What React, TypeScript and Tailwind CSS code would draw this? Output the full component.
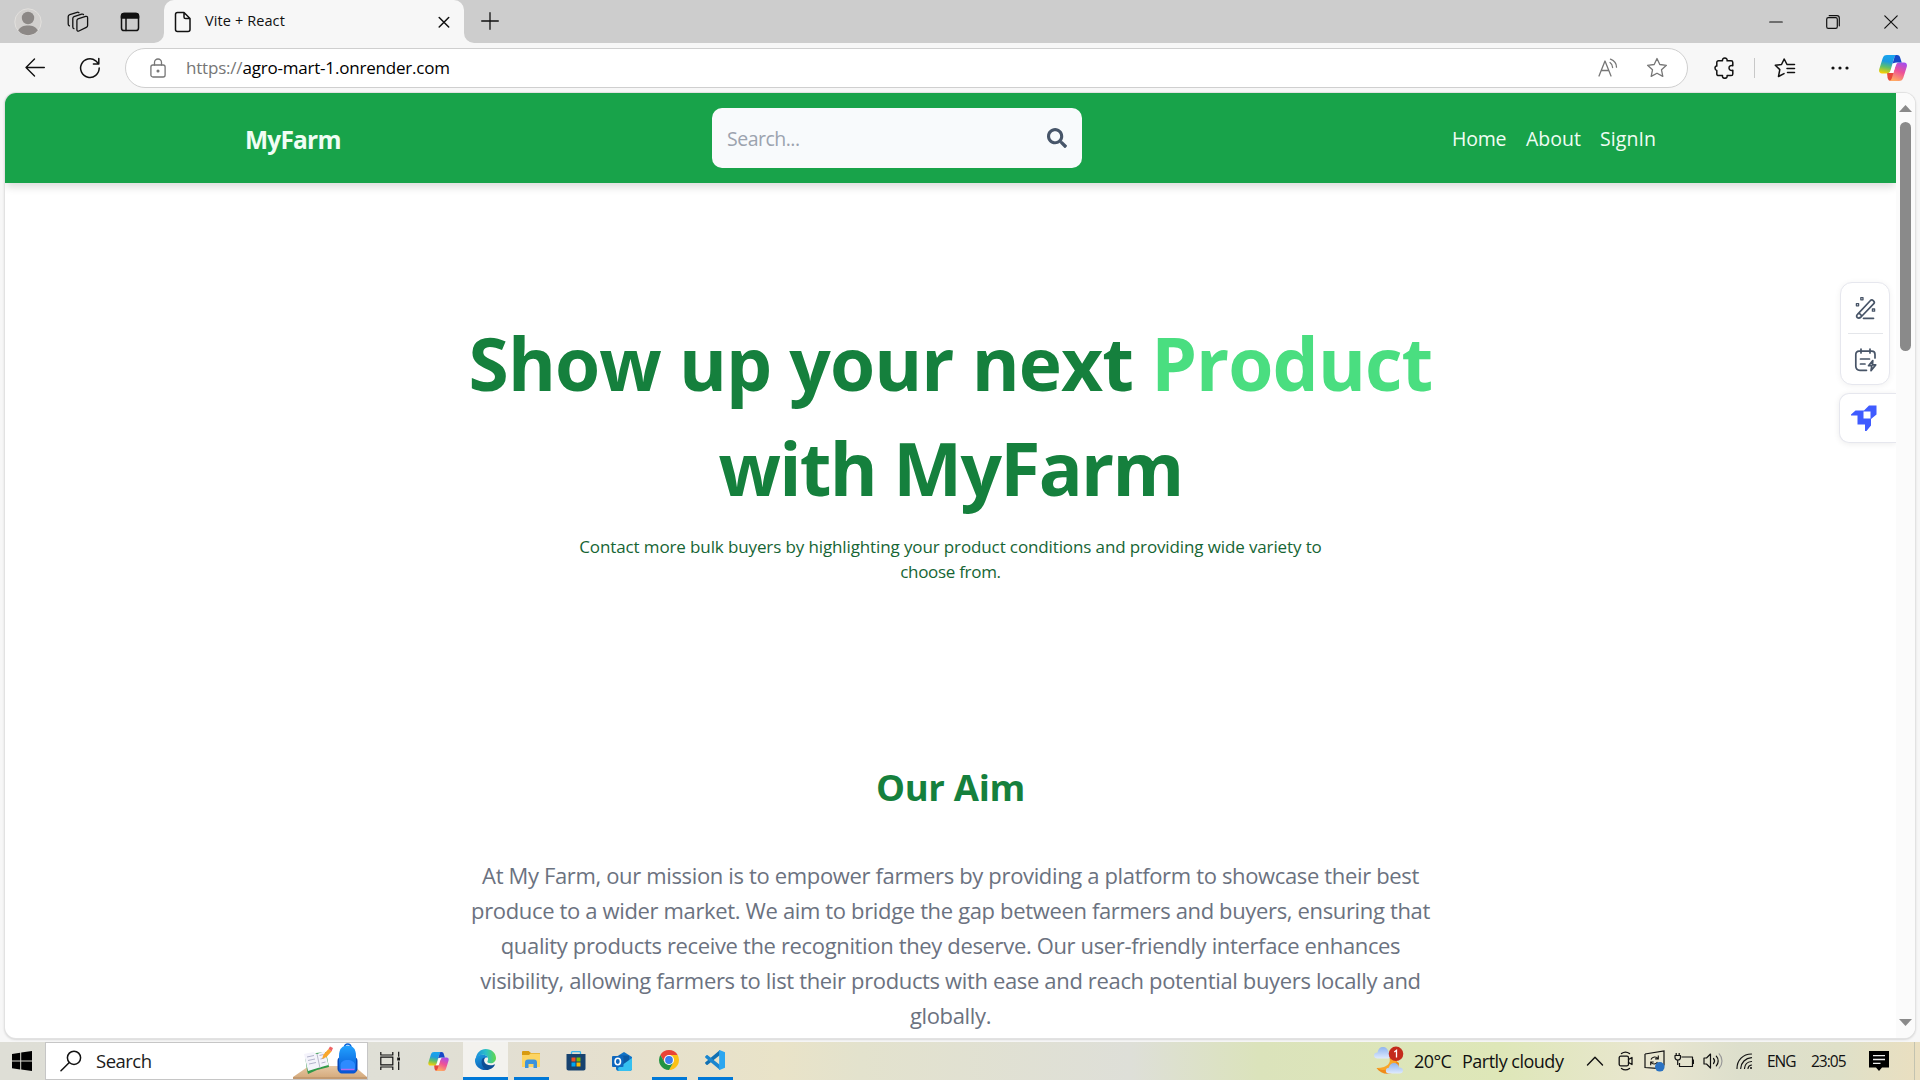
import type { ReactNode } from "react";
import { FaSearch } from "react-icons/fa";

type IconProps = { w: number; h: number; className?: string; stroke?: string; sw?: number; children: ReactNode };

function Icon({ w, h, className = "", stroke = "#111", sw = 1.4, children }: IconProps) {
  return (
    <svg
      width={w}
      height={h}
      viewBox={`0 0 ${w} ${h}`}
      fill="none"
      stroke={stroke}
      strokeWidth={sw}
      strokeLinecap="round"
      strokeLinejoin="round"
      className={`shrink-0 ${className}`}
    >
      {children}
    </svg>
  );
}

function Copilot({ w, h, id, className = "" }: { w: number; h: number; id: string; className?: string }) {
  return (
    <svg width={w} height={h} viewBox="0 0 28 26" className={`shrink-0 ${className}`}>
      <defs>
        <linearGradient id={`${id}a`} x1="0.5" y1="0" x2="0.3" y2="1">
          <stop offset="0" stopColor="#18a4f0" />
          <stop offset="0.35" stopColor="#1c9be0" />
          <stop offset="0.65" stopColor="#5fc06a" />
          <stop offset="1" stopColor="#fbd000" />
        </linearGradient>
        <linearGradient id={`${id}b`} x1="0.8" y1="0" x2="0.4" y2="1">
          <stop offset="0" stopColor="#a24df0" />
          <stop offset="0.5" stopColor="#ee5296" />
          <stop offset="1" stopColor="#ffa963" />
        </linearGradient>
      </defs>
      <path d="M8 18h7l-1 8h-2c-2 0-2.800-1-3.400-3z" fill="#e8483b" />
      <path d="M8 0h10c-1.800.3-2.600 2-3.200 4l-3.200 11c-.8 2.600-2 3.500-4.500 3.500H3C.5 18.500-.5 16.500.3 14L3.600 3.500C4.400 1 5.500 0 8 0z" fill={`url(#${id}a)`} />
      <path d="M20 26H10c1.800-.3 2.600-2 3.200-4l3.200-11c.8-2.600 2-3.500 4.500-3.500H25c2.500 0 3.500 2 2.700 4.500L24.400 22.500c-.8 2.500-1.900 3.500-4.400 3.500z" fill={`url(#${id}b)`} />
      <path d="M17 0h1c2 0 2.800 1 3.300 3l1.400 4.500H19c-2.500 0-4 .5-5.500 1L15 4c.5-2.300 1-3.500 2-4z" fill="#1549c8" />
      <path d="M14.200 8.500h4c-1 .6-1.400 1.700-1.800 2.900L14.200 18H10.500c1-.8 1.400-2 1.800-3.400z" fill="#fff" />
    </svg>
  );
}

function TabStrip() {
  return (
    <div className="flex h-[43px] shrink-0 items-center bg-[#cdcdcd]">
      <svg width="28" height="28" viewBox="0 0 28 28" className="ml-[14px] shrink-0">
        <circle cx="14" cy="14" r="13.200" fill="#d2d0ce" stroke="#e2e0dd" />
        <circle cx="14" cy="10" r="6.200" fill="#8c8886" />
        <path d="M4.200 22.500c2-4 5.600-5 9.800-5s7.800 1 9.800 5A13 13 0 0 1 14 27.200a13 13 0 0 1-9.800-4.700z" fill="#8c8886" />
      </svg>
      <Icon w={22} h={22} className="ml-[25px]" sw={1.3}>
        <path d="M11 7.800 18.600 5.400c1.200-.3 2 .3 2 1.500v7.600c0 1-.4 1.500-1.300 1.900l-7.400 3.600c-1.200.5-2-.1-2-1.300V9.800c0-1.100.3-1.700 1.100-2z" />
        <path d="m16.500 3.600-.4-.3c-.4-.3-.9-.3-1.500-.1L7 5.600c-.8.3-1.200.9-1.200 1.900v8.400c0 1 .3 1.500 1.100 1.700" />
        <path d="m12 1.700-.4-.3c-.4-.3-.9-.3-1.500-.1L2.800 3.600C1.900 3.900 1.200 4.600 1.200 5.600v7.400c0 1 .2 1.500 1.200 1.900" />
      </Icon>
      <Icon w={20} h={20} className="ml-[31px]" sw={1.5}>
        <rect x="1.500" y="1.500" width="17" height="17" rx="2.600" />
        <path d="M1.500 4.500c0-2 1-3 2.500-3h12c1.500 0 2.500 1 2.500 3V6h-17z" fill="#111" />
        <path d="M6 6v12.500" />
      </Icon>
      <div className="relative ml-[24px] flex h-[43px] w-[300px] items-center rounded-t-[10px] bg-[#f7f7f7]">
        <svg width="10" height="10" className="absolute bottom-0 -left-[10px]"><path d="M10 0v10H0A10 10 0 0 0 10 0z" fill="#f7f7f7" /></svg>
        <svg width="10" height="10" className="absolute -right-[10px] bottom-0"><path d="M0 0v10h10A10 10 0 0 1 0 0z" fill="#f7f7f7" /></svg>
        <Icon w={18} h={22} className="ml-[10px]" sw={1.5}>
          <path d="M3.500 1.500H10l6 6v11c0 1.200-.8 2-2 2H3.500c-1.200 0-2-.8-2-2v-15c0-1.200.8-2 2-2zM10 1.700V6c0 1.100.5 1.600 1.600 1.600H16" />
        </Icon>
        <span className="ml-[13px] pb-[2px] text-[14.5px] leading-5 tracking-[0.1px] text-[#111]">Vite + React</span>
        <Icon w={12} h={12} className="mr-[14px] ml-auto" sw={1.5}>
          <path d="m1.200 1.500 9.500 9.500M10.700 1.500 1.200 11" />
        </Icon>
      </div>
      <Icon w={18} h={18} className="mb-px ml-[17px]" sw={1.3}>
        <path d="M9 .7v16.600M.7 9h16.600" />
      </Icon>
      <div className="mr-[22px] ml-auto flex items-center">
        <Icon w={14} h={14} sw={1.1}><path d="M.7 7h12.600" /></Icon>
        <Icon w={14} h={14} className="ml-[43px]" sw={1.2}>
          <rect x=".7" y="2.700" width="10.600" height="10.600" rx="1.600" />
          <path d="M3.200.7H11c1.500 0 2.300.8 2.300 2.300v7.800" />
        </Icon>
        <Icon w={14} h={14} className="ml-[44px]" sw={1.2}><path d="m.8.8 12.400 12.400M13.200.8.8 13.200" /></Icon>
      </div>
    </div>
  );
}

function Toolbar() {
  return (
    <div className="flex h-[50px] shrink-0 items-center bg-[#f7f7f7]">
      <Icon w={20} h={20} className="ml-[25px]" sw={1.4}>
        <path d="M19.300 9.500H1M9.500 1 1 9.500l8.500 8.500" />
      </Icon>
      <Icon w={22} h={22} className="ml-[34px]" sw={1.5}>
        <path d="M20.200 11a9.300 9.300 0 1 1-3.500-7.200L19.600 6.800M19.800 1.500v5.400h-5.400" />
      </Icon>
      <div className="ml-[24px] flex h-10 w-[1563px] items-center rounded-full border border-[#cfcfcf] bg-white">
        <Icon w={16} h={20} className="ml-[24px]" stroke="#767676" sw={1.3}>
          <rect x=".9" y="7" width="14.200" height="12" rx="2" />
          <path d="M4.500 7V4.500a3.500 3.500 0 0 1 7 0V7" />
          <circle cx="8" cy="13" r=".9" fill="#767676" />
        </Icon>
        <span className="ml-[20px] text-[17px] leading-6 tracking-[-0.2px] text-black"><span className="text-[#767676]">https://</span>agro-mart-1.onrender.com</span>
        <Icon w={22} h={20} className="ml-auto" stroke="#767676" sw={1.3}>
          <path d="M1 18 7 3l6 15M3.300 12.500h7.400M12 4.500c1.800 1.200 2.600 2.900 2.600 5M12.500 1.200c3.700 1.500 6 4.200 6 8" />
        </Icon>
        <Icon w={22} h={22} className="mr-[19px] ml-[26px]" stroke="#767676" sw={1.3}>
          <path d="m11 1.500 2.800 6 6.600.8-4.900 4.500 1.300 6.600L11 16.200l-5.800 3.200 1.300-6.600L1.600 8.300l6.600-.8z" />
        </Icon>
      </div>
      <Icon w={22} h={22} className="ml-[26px]" sw={1.5}>
        <path d="M4.500 3.800h4C8.200 2 9.300 1 10.800 1s2.600 1 2.300 2.800h4c1 0 1.700.7 1.700 1.700v3.300c-2-.7-3.800.3-3.800 2.200s1.800 2.900 3.800 2.200v3.700c0 1-.7 1.700-1.700 1.700h-4c.3 1.800-.8 2.700-2.300 2.700s-2.600-.9-2.300-2.700h-4c-1 0-1.700-.7-1.700-1.700v-3.500C1.400 13.200 1 12.200 1 11s.7-2.200 1.800-2V5.500c0-1 .7-1.700 1.700-1.700z" />
      </Icon>
      <div className="ml-[18px] h-5 w-px bg-[#c8c8c8]" />
      <Icon w={22} h={20} className="ml-[19px]" sw={1.5}>
        <path d="M13 6.500 10.200 1 7.500 6.500l-6.200.8 4.500 4.300-1.300 6.900 5.500-2.900M13 6.500h7.500M13 10.500h7.500M13.500 14.500h7" />
      </Icon>
      <Icon w={18} h={6} className="ml-[35px]" sw={0}>
        <g fill="#111"><circle cx="2" cy="3" r="1.600" /><circle cx="9" cy="3" r="1.600" /><circle cx="16" cy="3" r="1.600" /></g>
      </Icon>
      <Copilot w={28} h={26} id="cpt" className="ml-[30px]" />
    </div>
  );
}

function SiteNav() {
  return (
    <nav className="relative flex h-[90px] shrink-0 items-center bg-[#18a34a] shadow-[0_5px_8px_-1px_rgba(0,0,0,0.14)]">
      <span className="w-[467px] pt-[5px] pl-[240px] text-[24.5px] font-bold tracking-[-0.8px] text-[#f0fdf4]">MyFarm</span>
      <div className="ml-[240px] flex h-[60px] w-[370px] items-center justify-between rounded-[10px] bg-[#f8fafc] px-[15px]">
        <span className="pt-[2px] text-[19.5px] tracking-[-0.5px] text-[#9ca3af]">Search...</span>
        <FaSearch size={20} className="text-[#475569]" />
      </div>
      <div className="ml-[370px] flex gap-5 pt-[2px] text-[19.5px] text-[#f0fdf4]">
        <span className="w-[54px] tracking-[-0.2px]">Home</span>
        <span className="w-[54px]">About</span>
        <span className="tracking-[0.1px]">SignIn</span>
      </div>
    </nav>
  );
}

const AIM_LINES = [
  "At My Farm, our mission is to empower farmers by providing a platform to showcase their best",
  "produce to a wider market. We aim to bridge the gap between farmers and buyers, ensuring that",
  "quality products receive the recognition they deserve. Our user-friendly interface enhances",
  "visibility, allowing farmers to list their products with ease and reach potential buyers locally and",
  "globally.",
];

function SideTools() {
  return (
    <div className="absolute top-[189px] right-0 flex flex-col items-end gap-2">
      <div className="mr-[6px] flex h-[103px] w-[50px] flex-col items-center rounded-[12px] border border-[#e6e7ee] bg-white shadow-[0_1px_6px_rgba(0,0,0,0.06)]">
        <Icon w={24} h={24} className="mt-[13px] ml-px" stroke="#475467" sw={1.7}>
          <path d="M3.500 18.300 16.500 4.500c1.800-1.600 5 1.300 3.300 3.200L7 21c-2.800 2.500-6-.3-3.500-2.700zM5 17l2.800 2.800M9.500 22.300h10" />
          <g strokeWidth="1.300"><rect x="6.800" y="1.600" width="2.200" height="2.200" /><rect x="2.400" y="7.600" width="2.200" height="2.200" /><rect x="18.400" y="13" width="2.200" height="2.200" /></g>
        </Icon>
        <div className="mt-[13px] h-px w-[35px] bg-[#e4e6ea]" />
        <Icon w={24} h={24} className="mt-[14px] ml-px" stroke="#475467" sw={1.7}>
          <path d="M21 10V6.500c0-2-1.200-3.300-3.300-3.300H5C3 3.200 1.800 4.500 1.800 6.500V18c0 2.600 1.600 4.300 4.200 4.300h6.500M7 1v4M16 1v4M6.500 11h9M6.500 16h4.500" />
          <path d="m18.800 12.500-4.300 5.200h3.300l-.8 5 4.700-5.800h-3.200z" />
        </Icon>
      </div>
      <div className="flex h-[50px] w-[57px] items-center rounded-l-[10px] border border-r-0 border-[#e6e7ee] bg-white pl-[11px] shadow-[0_1px_6px_rgba(0,0,0,0.08)]">
        <svg width="26" height="26" viewBox="0 0 26 26" fill="#3f5bff">
          <path d="M4.500 5.500H13L18 .5h7.500v9L20 14v6.500L15.500 26H14v-6.500H6.500v-9L0 10.500V9.500z" />
          <rect x="12.500" y="6.500" width="7" height="7" fill="#fff" />
        </svg>
      </div>
    </div>
  );
}

function PageView() {
  return (
    <div className="h-[949px] shrink-0 bg-[#f7f7f7] px-[5px] pb-[4px]">
      <div className="flex h-[945px] overflow-hidden rounded-[11px] bg-white shadow-[0_0_0_1px_#e2e2e2,0_1px_2px_1px_#d8d8d8]">
        <main className="relative flex w-[1891px] flex-col overflow-hidden">
          <SiteNav />
          <section className="mt-[127px] text-center">
            <h1 className="text-[73px] leading-[105px] font-bold text-[#15803d]">
              <span className="block tracking-[-0.9px]">Show up your next <span className="text-[#4ade80]">Product</span></span>
              <span className="block tracking-[-1.7px]">with MyFarm</span>
            </h1>
            <p className="mt-[14px] text-[17px] leading-[25px] text-[#166534]">
              <span className="block tracking-[-0.12px]">Contact more bulk buyers by highlighting your product conditions and providing wide variety to</span>
              <span className="block tracking-[-0.3px]">choose from.</span>
            </p>
          </section>
          <section className="mt-[181px] text-center">
            <h2 className="text-[36.5px] leading-[45px] font-bold tracking-[-0.3px] text-[#15803d]">Our Aim</h2>
            <p className="mt-[48px] text-[22px] leading-[35px] tracking-[-0.35px] text-[#6b7280]">
              {AIM_LINES.map((line) => (
                <span key={line} className="block">{line}</span>
              ))}
            </p>
          </section>
          <SideTools />
        </main>
        <div className="flex flex-1 flex-col items-center bg-[#fbfbfb] pt-[12px] pr-[1px] pb-[12px]">
          <svg width="13" height="7" viewBox="0 0 13 7" fill="#8a8a8a"><path d="M6.500 0 13 7H0z" /></svg>
          <div className="mt-[10px] h-[229px] w-[11px] rounded-full bg-[#8a8a8a]" />
          <svg width="13" height="7" viewBox="0 0 13 7" fill="#8a8a8a" className="mt-auto"><path d="M6.500 7 13 0H0z" /></svg>
        </div>
      </div>
    </div>
  );
}

function TaskbarSearch() {
  return (
    <div className="flex h-[38px] w-[323px] items-center border border-[#c6c6c6] bg-white">
      <Icon w={22} h={22} className="ml-[14px]" sw={1.5}>
        <circle cx="14" cy="7.800" r="6.600" />
        <path d="M9.300 12.500 1 20.800" />
      </Icon>
      <span className="ml-[14px] text-[18.5px] leading-6 tracking-[-0.5px] text-[#1b1b1b]">Search</span>
      <svg width="74" height="36" viewBox="0 0 74 36" className="ml-auto shrink-0">
        <defs>
          <linearGradient id="bag" x1="0" y1="0" x2="0" y2="1"><stop offset="0" stopColor="#22a2ff" /><stop offset="1" stopColor="#0653d3" /></linearGradient>
          <linearGradient id="desk" x1="0" y1="0" x2="0" y2="1"><stop offset="0" stopColor="#e6c8a4" /><stop offset="1" stopColor="#d6ac7f" /></linearGradient>
        </defs>
        <path d="M16 23h45l13 11H0z" fill="url(#desk)" />
        <path d="M0 34h74v2H0z" fill="#c39a70" />
        <path d="m12 13 11-3 10-1 3 15-12 3-9 4-1-4z" fill="#2f9a48" />
        <path d="m11 11 9-2 4 2 8-3 3.500 14-9 2.500-11.500 3.500z" fill="#f4f3fb" />
        <path d="m24 11 3 14" stroke="#b9bacb" strokeWidth="1" />
        <path d="m14 14 7-1.500M15 17.500l7-1.500M16 21l7-1.500M26.500 12.500l4-1M27.500 16l4-1M28.500 20l4-1" stroke="#a9abc4" strokeWidth=".9" />
        <path d="m29 16 1.500-4.500 5-5.500 3 2.500-5 5.500z" fill="#f9a72b" />
        <path d="m35.500 6 1.500-2.500 3 1.500-1.500 3.500z" fill="#f06262" />
        <path d="M51.500 4c.5-4 6-4 6.500 0" stroke="#0a64d8" strokeWidth="1.500" fill="none" />
        <rect x="44.500" y="14" width="20" height="15.500" rx="4" fill="#0648b8" />
        <path d="M46 13c0-7 3-10.500 8.500-10.500S63 6 63 13v15c0 1.500-1 2.500-2.500 2.500h-12C47 30.500 46 29.500 46 28z" fill="url(#bag)" />
        <path d="M47.500 22c0-3 3-5 7-5s7.500 2 7.500 5v4.500H47.500z" fill="#2d8bff" />
        <path d="M48 26.500h13.500" stroke="#b46bf0" strokeWidth="1.500" />
      </svg>
    </div>
  );
}

function EdgeLogo() {
  return (
    <svg width="21" height="21" viewBox="0 0 24 24" className="shrink-0">
      <defs>
        <linearGradient id="e1" x1="0" y1="0.3" x2="1" y2="0.3"><stop offset="0" stopColor="#1b8fdd" /><stop offset="0.5" stopColor="#2bc0c8" /><stop offset="1" stopColor="#62d84a" /></linearGradient>
        <linearGradient id="e2" x1="0" y1="0" x2="0.5" y2="1"><stop offset="0" stopColor="#1e9fe4" /><stop offset="1" stopColor="#0c5fb2" /></linearGradient>
      </defs>
      <path d="M1 11C1.500 4.500 6.500 0 12.200 0 19 0 24 4.700 24 10.300c0 3.700-2.800 6-6 6-3.500 0-4.600-1.400-3.600-2.600 1.800-3.200-.6-7.200-5-7.200C5.200 6.500 2 9 1 11z" fill="url(#e1)" />
      <path d="M0 12.300C.5 8.700 4.300 6.500 9 6.500c3 0 5 1.300 5.800 3.500-2.600-1-5.300.8-5.300 4.300 0 4.200 5 7.500 9.500 6.400C16.500 23.200 14 24 12 24 5 24-.5 18.700 0 12.300z" fill="url(#e2)" />
      <path d="M9 10.500c-3 3-1.500 10 4 13.400 4.500 0 8-2.700 9.600-5.700.3-.5-.1-.9-.6-.6-4.800 2.200-10.500.4-11.500-3.600-.3-1.300 0-2.800 1-3.900-1-.4-1.700-.2-2.500.4z" fill="#0d4e96" />
    </svg>
  );
}

function Taskbar() {
  return (
    <footer className="flex h-[38px] items-center bg-[linear-gradient(90deg,#deded6_0px,#dfdfd6_400px,#e4dfd0_560px,#e9e3c8_780px,#e3e2cd_860px,#dedfd8_1130px,#dbe3bb_1260px,#dee7b8_1500px,#e9e6d0_1650px,#dddfcc_1740px,#dfe0c8_1840px,#eadfc0_1920px)]">
      <svg width="20" height="20" viewBox="0 0 20 20" className="ml-3 shrink-0"><path d="M0 2.900 8.200 1.700v7.900H0zM9.200 1.500 20 0v9.600H9.200zM0 10.500h8.200v7.900L0 17.200zM9.200 10.500H20V20L9.200 18.500z" /></svg>
      <div className="ml-[13px]"><TaskbarSearch /></div>
      <Icon w={20} h={20} className="ml-3" sw={1.2}>
        <path d="M.8 1v3h12V1M.8 19v-3h12v3M.8 6.200h12v7.600H.8zM18.700.8v5M18.700 10.500v8.500" strokeLinecap="butt" strokeLinejoin="miter" />
        <path d="M17.200 6.500h3v3h-3z" fill="#111" stroke="none" />
      </Icon>
      <Copilot w={21} h={19} id="cpb" className="ml-[28px]" />
      <div className="ml-[14px] flex h-[38px] w-[45px] items-center justify-center border-b-[3px] border-[#0078d7] bg-[#f3f2ee] pr-px"><EdgeLogo /></div>
      <div className="ml-[6px] flex h-[38px] w-[35px] items-center justify-center border-b-[3px] border-[#0078d7] pr-px">
        <svg width="18" height="17" viewBox="0 0 18 17">
          <path d="M0 1.200C0 .5.500 0 1.200 0h5.500L9 2H17c.6 0 1 .4 1 1v3H0z" fill="#d89b10" />
          <path d="M0 4h7l1.500-1.500H17c.6 0 1 .4 1 1V16H0z" fill="#fcd462" />
          <path d="M3 17v-5.500C3 9.500 4 8.500 6 8.500h6c2 0 3 1 3 3V17h-3.500v-4h-5v4z" fill="#3c93dc" />
        </svg>
      </div>
      <svg width="20" height="20" viewBox="0 0 20 20" className="ml-[17px] shrink-0">
        <path d="M5.500 4V1.500c0-.5.300-.8.800-.8h7.400c.5 0 .8.300.8.800V4" fill="none" stroke="#39b6ee" strokeWidth="1.300" />
        <path d="M.5 3h19v14.500c0 1.200-.8 2-2 2h-15c-1.200 0-2-.8-2-2z" fill="#17426f" />
        <path d="M5.500 6.500h4v4h-4z" fill="#f25022" /><path d="M10.500 6.500h4v4h-4z" fill="#7fba00" /><path d="M5.500 11.500h4v4h-4z" fill="#00a4ef" /><path d="M10.500 11.500h4v4h-4z" fill="#ffb900" />
      </svg>
      <svg width="20" height="19" viewBox="0 0 20 19" className="ml-[26px] shrink-0">
        <path d="M4 5 12 0l8 5v11.500c0 1.500-.8 2.500-2.500 2.500h-11C5 19 4 18 4 16.500z" fill="#1173c7" />
        <path d="M7 3.500h10V12H7z" fill="#0c59a4" /><path d="m20 6-14 10 .5 3h11c1.700 0 2.500-1 2.500-2.500z" fill="#35c0f0" />
        <rect x="0" y="4" width="11.500" height="11" rx="1" fill="#0f67bd" />
        <ellipse cx="5.800" cy="9.500" rx="2.700" ry="3.200" fill="none" stroke="#fff" strokeWidth="1.600" />
      </svg>
      <div className="ml-[20px] flex h-[38px] w-[35px] items-center justify-center border-b-[3px] border-[#0078d7] pr-px">
        <svg width="20" height="20" viewBox="0 0 20 20">
          <path d="M1.340 5A10 10 0 0 1 18.660 5H10L5.670 12.500z" fill="#ea4335" />
          <path d="M18.660 5A10 10 0 0 1 10 20l4.330-7.500L10 5z" fill="#fbc116" />
          <path d="M10 20A10 10 0 0 1 1.340 5l4.330 7.500h8.660z" fill="#229342" />
          <circle cx="10" cy="10" r="5" fill="#fff" /><circle cx="10" cy="10" r="3.900" fill="#3b7ded" />
        </svg>
      </div>
      <div className="ml-[11px] flex h-[38px] w-[35px] items-center justify-center border-b-[3px] border-[#0078d7] pr-px">
        <svg width="20" height="20" viewBox="0 0 24 24">
          <path d="M18 0v6L3.200 17.700c-.5.400-1 .3-1.500-.1L.5 16.500c-.6-.6-.6-1.200 0-1.700z" fill="#1070b3" />
          <path d="M18 24v-6L3.200 6.300c-.5-.4-1-.3-1.500.1L.5 7.500c-.6.6-.6 1.200 0 1.700z" fill="#1a86cf" />
          <path d="M17.500 0 24 2.800v18.400L17.500 24c-.8 0-.8-.5-.5-1.200V1.200c-.3-.7-.3-1.200.5-1.200z" fill="#2ba6f0" />
        </svg>
      </div>

      <div className="ml-auto flex items-center">
        <svg width="30" height="30" viewBox="0 0 30 30" className="mb-[3px] shrink-0">
          <defs><linearGradient id="cl" x1="0" y1="0" x2="0" y2="1"><stop offset="0" stopColor="#8fb4f0" /><stop offset="1" stopColor="#dfeafd" /></linearGradient></defs>
          <path d="M18 13c0 8-6 10.500-15.500 10C6 28 12 30 18 28c5-1.700 7-6 7-10z" fill="#f08a17" />
          <path d="M15 12c3 6-2 11-12 11 3 2 8 3 12 1 6-2 8-6 7-12z" fill="#f9a629" />
          <path d="M3.500 13.500C1.500 13.500 0 12.300 0 10.500s1.500-3 3.500-3C4 4 6 2 9 2s5 2 5.500 5c2 .3 3 1.500 3 3.300s-1.500 3.200-3.500 3.200z" fill="url(#cl)" />
          <path d="M15 28.500c-2 0-3.200-1-3.200-2.800s1.300-2.700 3-2.900C15.500 19.500 17.500 18 20 18c2.800 0 4.500 1.700 5 4.500 2.500 0 4 1 4 3s-1.300 3-3.500 3z" fill="url(#cl)" />
          <circle cx="22" cy="8.800" r="7.300" fill="#c42b1c" />
          <path d="M20.300 7 22.500 5.300v7.200" stroke="#fff" strokeWidth="1.300" fill="none" />
        </svg>
        <span className="ml-[10px] w-[38px] text-[18px] leading-6 tracking-[-0.6px] whitespace-nowrap text-[#111]">20°C</span>
        <span className="ml-[10px] w-[105px] text-[18px] leading-6 tracking-[-0.5px] whitespace-nowrap text-[#111]">Partly cloudy</span>
        <Icon w={18} h={12} className="ml-[19px]" sw={1.4}><path d="m1.500 10 7.500-7.700 7.500 7.700" /></Icon>
        <Icon w={16} h={20} className="ml-[14px]" sw={1.3}>
          <path d="M3.500 2.500c2.500-1.800 5.500-1.800 8 0M3.500 17.500c2.500 1.800 5.500 1.800 8 0M10.500 8.500l3.500-2v7l-3.500-2" />
          <rect x="1.200" y="5.200" width="9.300" height="9.600" rx="1.500" />
        </Icon>
        <svg width="22" height="22" viewBox="0 0 22 22" className="ml-[10px] shrink-0">
          <path d="m1 4 19-3v14.500M1 4v13.500l12 .8" stroke="#111" strokeWidth="1.200" fill="none" />
          <path d="M7 9.500c1-3 5.500-3.500 7-.8M14.300 5.500v3.400h-3.200M13.500 12c-1.500 2.700-5 2.700-6.500.3M6.700 15.300V12h3" stroke="#111" strokeWidth="1.100" fill="none" />
          <circle cx="15.800" cy="16.800" r="4.800" fill="#2b72c2" />
        </svg>
        <Icon w={20} h={18} className="ml-[8px]" sw={1.2}>
          <path d="M7.500 5h11v9.500h-13V11M18.500 8h1.200v3.500h-1.200M2.200 1v2.500M5.200 1v2.500M1 3.500h5.500v2c0 1.500-1 2.500-2.700 2.500S1 7 1 5.500zM3.700 8v5" strokeLinecap="butt" />
        </Icon>
        <Icon w={20} h={18} className="ml-[9px]" sw={1.2}>
          <path d="M1 6v6h2.500l4 4V2l-4 4zM10.500 6.500c1.300 1.500 1.300 3.500 0 5M13.300 4.200c2.500 2.700 2.500 6.900 0 9.600" />
          <path d="M16.200 1.800c3.700 4 3.700 10.400 0 14.400" stroke="#999" />
        </Icon>
        <Icon w={18} h={18} className="ml-[13px]" sw={1.2}>
          <path d="M1 16.500C1 8 7 2 15.500 2M4.700 16.500C5 10.500 9.500 6 15.500 5.700M8.500 16.500c.3-4 3-6.700 7-7M12 16.500c.2-2 1.500-3.300 3.500-3.500" />
          <circle cx="15" cy="16" r="1" fill="#111" stroke="none" />
        </Icon>
        <span className="ml-[13px] w-[30px] text-[15.5px] leading-5 tracking-[-1px] text-[#111]">ENG</span>
        <span className="ml-[14px] w-[36px] text-[15.5px] leading-5 tracking-[-1px] text-[#111]">23:05</span>
        <svg width="20" height="20" viewBox="0 0 20 20" className="ml-[22px] shrink-0">
          <path d="M0 0h20v16.500h-7L10 20l-3-3.500H0z" />
          <path d="M4 4.700h12M4 8.500h12M4 12.300h7.500" stroke="#eee" strokeWidth="1.300" />
        </svg>
        <div className="mr-[5px] ml-[25px] h-[38px] w-px bg-[#c3c3b0]" />
      </div>
    </footer>
  );
}

export default function App() {
  return (
    <div className="flex h-[1080px] w-[1920px] flex-col overflow-hidden bg-[#f7f7f7] font-['Open_Sans',sans-serif]">
      <TabStrip />
      <Toolbar />
      <PageView />
      <Taskbar />
    </div>
  );
}
